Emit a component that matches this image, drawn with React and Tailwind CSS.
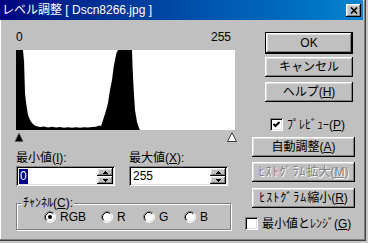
import React from "react";

const raised =
  "bg-[#c0c0c0] shadow-[inset_-1px_-1px_0_#000,inset_1px_1px_0_#fff,inset_-2px_-2px_0_#808080,inset_2px_2px_0_#dfdfdf]";
const sunken =
  "shadow-[inset_1px_1px_0_#808080,inset_-1px_-1px_0_#fff,inset_2px_2px_0_#000,inset_-2px_-2px_0_#dfdfdf]";

function Btn({ children, className = "", disabled = false }) {
  return (
    <div
      className={
        "flex items-center justify-center h-[20px] whitespace-nowrap " +
        raised +
        " " +
        className +
        (disabled ? " text-[#808080] [text-shadow:1px_1px_0_#fff]" : " text-black")
      }
    >
      {children}
    </div>
  );
}

function Check({ checked }) {
  return (
    <div className={"w-[13px] h-[13px] shrink-0 bg-white flex items-center justify-center " + sunken}>
      {checked && (
        <svg width="7" height="7" viewBox="0 0 7 7">
          <path d="M0.5 3 L2.5 5 L6.5 1" stroke="#000" strokeWidth="2" fill="none" />
        </svg>
      )}
    </div>
  );
}

function Radio({ checked }) {
  return (
    <svg width="12" height="12" viewBox="0 0 12 12" className="shrink-0">
      <circle cx="6" cy="6" r="5" fill="#fff" />
      <path d="M9.89 2.11 A5.5 5.5 0 0 0 2.11 9.89" stroke="#808080" fill="none" />
      <path d="M2.11 9.89 A5.5 5.5 0 0 0 9.89 2.11" stroke="#fff" fill="none" />
      <path d="M9.18 2.82 A4.5 4.5 0 0 0 2.82 9.18" stroke="#000" fill="none" />
      <path d="M2.82 9.18 A4.5 4.5 0 0 0 9.18 2.82" stroke="#dfdfdf" fill="none" />
      {checked && <circle cx="6" cy="6" r="2" fill="#000" />}
    </svg>
  );
}

function Spin() {
  return (
    <div className="w-[16px] h-full flex flex-col">
      <div className={"flex-1 flex items-center justify-center " + raised}>
        <svg width="5" height="3" viewBox="0 0 5 3">
          <path d="M2 0h1v1h1v1h1v1H0V2h1V1h1Z" fill="#000" />
        </svg>
      </div>
      <div className={"flex-1 flex items-center justify-center " + raised}>
        <svg width="5" height="3" viewBox="0 0 5 3">
          <path d="M0 0h5v1H4v1H3v1H2V2H1V1H0Z" fill="#000" />
        </svg>
      </div>
    </div>
  );
}

function Field({ children }) {
  return (
    <div className={"w-[99px] h-[20px] flex p-[2px] bg-white " + sunken}>
      <div className="flex-1 bg-white flex items-center pl-[1px]">{children}</div>
      <Spin />
    </div>
  );
}

export default function App() {
  return (
    <div className="w-[368px] h-[243px] bg-[#c8c8c8] overflow-hidden font-['Liberation_Sans','Noto_Sans_CJK_JP',sans-serif] text-[12px] leading-[14px] text-black">
      <div className="w-[366px] h-[241px] flex flex-col bg-[#c0c0c0] border-r border-b border-[#404040] shadow-[inset_-1px_-1px_0_#808080,inset_1px_1px_0_#fff]">
        {/* title bar */}
        <div className="h-[20px] mr-[2px] flex items-center justify-between pl-[2px] pr-[2px] bg-gradient-to-r from-[#000080] to-[#1084d0]">
          <span className="text-white whitespace-pre">レベル調整 [ Dscn8266.jpg ]</span>
          <div className={"w-[15px] h-[13px] flex items-center justify-center " + raised}>
            <svg width="8" height="7" viewBox="0 0 8 7">
              <path d="M1 0.5 L7 6.5 M7 0.5 L1 6.5" stroke="#000" strokeWidth="1.6" fill="none" />
            </svg>
          </div>
        </div>

        {/* body */}
        <div className="flex pl-[16px]">
          {/* left column */}
          <div className="w-[219px] flex flex-col pt-[10px]">
            <div className="h-[14px] flex justify-between pr-[4px]">
              <span>0</span>
              <span>255</span>
            </div>
            <div className="mt-[6px] h-[80px] bg-white">
              <svg width="219" height="80" viewBox="0 0 219 80" className="block">
                <path
                  fill="#000"
                  d="M0 80 L0 0 L7 0 L7.4 12 L7.8 0 L8.3 20 L9 43 L10 52 L11 59 L12 65 L14 70 L16 73 L18 75 L20 76 L24 77 L28 76.5 L32 77.5 L36 76.8 L40 77.6 L44 77 L48 77.8 L52 77.2 L56 77.8 L60 77.3 L64 77.8 L68 77.2 L72 77.6 L76 77 L80 76.8 L83 75.5 L85 76 L87 70 L89 64 L91 57 L92 53 L94 40 L96 30 L97.5 18 L99 10 L100.5 3 L102 0 L116 0 L116.6 18 L117.3 32 L118 45 L119 60 L120 66 L121 72 L122 75 L123 78 L124 80 Z"
                />
              </svg>
            </div>
            <svg width="225" height="10" viewBox="0 0 225 10" className="block mt-[2px] -ml-[2px]">
              <path d="M1 9.5 L5 1 L9 9.5 Z" fill="#000" stroke="#606060" strokeWidth="0.6" />
              <path d="M213.5 9.5 L218 0.8 L222.5 9.5 Z" fill="#fff" stroke="#404040" strokeWidth="1" />
            </svg>
            <div className="mt-[9px] h-[14px] flex whitespace-nowrap">
              <span className="w-[113px]">
                最小値(<span className="underline">I</span>):
              </span>
              <span>
                最大値(<span className="underline">X</span>):
              </span>
            </div>
            <div className="mt-[1px] flex gap-[14px]">
              <Field>
                <span className="bg-[#000080] text-white px-[1px] leading-[15px]">0</span>
              </Field>
              <Field>
                <span className="pl-[1px]">255</span>
              </Field>
            </div>
            <div className="mt-[10px] relative pt-[7px] w-[215px]">
              <div className="h-[27px] border border-[#808080] shadow-[inset_1px_1px_0_#fff,1px_1px_0_#fff] flex items-center pl-[27px]">
                <div className="w-[57px] flex items-center gap-[4px]">
                  <Radio checked />
                  <span>RGB</span>
                </div>
                <div className="w-[42px] flex items-center gap-[4px]">
                  <Radio />
                  <span>R</span>
                </div>
                <div className="w-[41px] flex items-center gap-[4px]">
                  <Radio />
                  <span>G</span>
                </div>
                <div className="flex items-center gap-[4px]">
                  <Radio />
                  <span>B</span>
                </div>
              </div>
              <span className="absolute left-[6px] top-0 bg-[#c0c0c0] px-[1px] whitespace-nowrap">
                ﾁｬﾝﾈﾙ(<span className="underline">C</span>):
              </span>
            </div>
          </div>

          {/* right column */}
          <div className="ml-[10px] w-[110px] flex flex-col pt-[12px]">
            <div className="ml-[20px] w-[88px] h-[22px] border border-black">
              <div className={"w-full h-full flex items-center justify-center " + raised}>OK</div>
            </div>
            <Btn className="ml-[20px] w-[88px] mt-[3px]">キャンセル</Btn>
            <Btn className="ml-[20px] w-[88px] mt-[5px]">
              ヘルプ(<span className="underline">H</span>)
            </Btn>
            <div className="ml-[25px] mt-[16px] h-[13px] flex items-center gap-[4px] whitespace-nowrap">
              <Check checked />
              <span>
                ﾌﾟﾚﾋﾞｭｰ(<span className="underline">P</span>)
              </span>
            </div>
            <Btn className="ml-[7px] w-[103px] mt-[6px]">
              自動調整(<span className="underline">A</span>)
            </Btn>
            <Btn className="ml-[7px] w-[103px] mt-[5px]" disabled>
              <span className="tracking-[1px]">ﾋｽﾄｸﾞﾗﾑ</span>拡大(<span className="underline">M</span>)
            </Btn>
            <Btn className="ml-[7px] w-[103px] mt-[6px]">
              <span className="tracking-[1px]">ﾋｽﾄｸﾞﾗﾑ</span>縮小(<span className="underline">R</span>)
            </Btn>
            <div className="mt-[9px] h-[13px] flex items-center gap-[4px] whitespace-nowrap">
              <Check />
              <span>
                最小値とﾚﾝｼﾞ(<span className="underline">G</span>)
              </span>
            </div>
          </div>
        </div>
      </div>
    </div>
  );
}
